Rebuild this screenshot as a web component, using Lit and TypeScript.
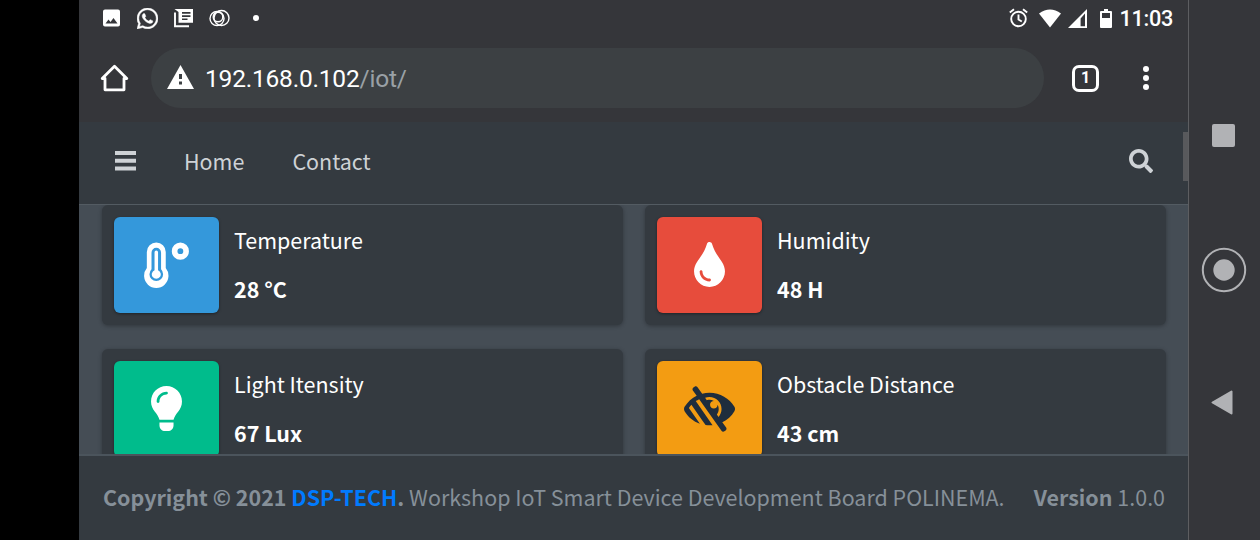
import { LitElement, html, css } from "lit";
import { customElement, property } from "lit/decorators.js";

const glyphs = {
  temperature: html`<svg width="46" height="46" viewBox="0 0 46 46">
    <g transform="translate(.1 .2) scale(.975)">
      <path fill="#fff" d="M2.800 10a9.700 9.700 0 0 1 19.400 0v16.500a12.500 12.500 0 1 1-19.400 0z"/>
      <path fill="#3498db" d="M7.600 10.700a4.900 4.900 0 0 1 9.800 0v17.100a7 7 0 1 1-9.800 0z"/>
      <path fill="#fff" d="M10.700 10.400a1.800 1.800 0 0 1 3.600 0v18.300a4.600 4.600 0 1 1-3.600 0z"/>
      <circle cx="37.200" cy="9.200" r="5.900" fill="none" stroke="#fff" stroke-width="5.800"/>
    </g></svg>`,
  humidity: html`<svg width="31" height="45" viewBox="0 0 352 512"><path fill="#fff" d="M205.22 22.09c-7.94-28.78-49.44-30.12-58.44 0C100.01 179.85 0 222.72 0 333.91 0 432.35 78.72 512 176 512s176-79.65 176-178.09c0-111.75-99.79-153.34-146.78-311.82zM176 448c-61.75 0-112-50.25-112-112 0-8.84 7.16-16 16-16s16 7.16 16 16c0 44.11 35.89 80 80 80 8.84 0 16 7.16 16 16s-7.16 16-16 16z"/></svg>`,
  light: html`<svg width="31" height="45" viewBox="0 0 352 512"><path fill="#fff" fill-rule="evenodd" d="M176 0C76 0 0 80 0 176c0 45 17 85 44 116 17 19 43 58 52 92h160c9-34 35-73 52-92 27-31 44-71 44-116C352 79 273 0 176 0zm0 64c9 0 16 7 16 16s-7 16-16 16c-44 0-80 36-80 80 0 9-7 16-16 16s-16-7-16-16c0-62 50-112 112-112zM96 416v32c0 35 29 64 64 64h32c35 0 64-29 64-64v-32z"/></svg>`,
  distance: html`<svg width="51" height="46" viewBox="0 0 576 512"><path fill="#1f2d3d" d="M569.344 231.631C512.96 135.949 407.81 72 288 72c-28.468 0-56.102 3.619-82.451 10.415L152.778 10.24c-7.601-10.858-22.564-13.5-33.423-5.9l-13.114 9.178c-10.86 7.601-13.502 22.566-5.9 33.426l43.131 58.395C89.449 131.73 40.228 174.683 6.682 231.581c-.01.017-.023.033-.034.05-8.765 14.875-8.964 33.528 0 48.739 38.5 65.332 99.742 115.862 172.859 141.349L55.316 244.302A272.194 272.194 0 0 1 83.61 208.39l119.4 170.58h.01l40.63 58.04a330.055 330.055 0 0 0 78.94 1.17l-189.98-271.4a277.628 277.628 0 0 1 38.777-21.563l251.836 356.544c7.601 10.858 22.564 13.499 33.423 5.9l13.114-9.178c10.86-7.601 13.502-22.567 5.9-33.426l-43.12-58.377-.007-.009c57.161-27.978 104.835-72.04 136.81-126.301a47.938 47.938 0 0 0 .001-48.739zM390.026 345.94l-19.066-27.23c24.682-32.567 27.711-76.353 8.8-111.68v.03c0 23.65-19.17 42.82-42.82 42.82-23.828 0-42.82-19.349-42.82-42.82 0-23.65 19.17-42.82 42.82-42.82h.03c-24.75-13.249-53.522-15.643-79.51-7.68l-19.068-27.237C253.758 123.306 270.488 120 288 120c75.162 0 136 60.826 136 136 0 34.504-12.833 65.975-33.974 89.94z"/></svg>`,
};
type Kind = keyof typeof glyphs;

@customElement("sensor-card")
class SensorCard extends LitElement {
  @property() kind: Kind = "temperature";
  @property() label = "";
  @property() value = "";
  static styles = css`
    :host { display: flex; box-sizing: border-box; height: 120px; padding: 12px; border-radius: 6px;
      background: #343a40; color: #fff; box-shadow: 0 1px 4px rgba(0,0,0,.3); }
    .tile { display: flex; align-items: center; justify-content: center; box-sizing: border-box; width: 105px; height: 96px;
      padding-bottom: 1px; border-radius: 6px; box-shadow: 0 1px 3px rgba(0,0,0,.4); }
    .tile svg { display: block; }
    .temperature { background: #3498db; }
    .humidity { background: #e74c3c; }
    .light { background: #00bc8c; }
    .distance { background: #f39c12; }
    .copy { display: flex; flex-direction: column; gap: 13px; padding: 5px 0 0 15px; }
    .copy span { line-height: 36px; white-space: nowrap; }
    .value { font-weight: 700; }
  `;
  render() {
    return html`<div class="tile ${this.kind}">${glyphs[this.kind]}</div>
      <div class="copy"><span>${this.label}</span><span class="value">${this.value}</span></div>`;
  }
}

@customElement("status-bar")
class StatusBar extends LitElement {
  static styles = css`
    :host { display: flex; align-items: center; justify-content: space-between; height: 36px;
      padding: 0 15px 0 23px; color: #fff; font: 500 21.700px/36px Roboto, sans-serif; }
    .group { display: flex; align-items: center; }
    svg { display: block; }
    .left { gap: 15px; }
    .chat { margin-left: 1px; }
    .dot { width: 6px; height: 6px; border-radius: 50%; background: #fff; margin-left: 8px; }
    .wifi { margin-left: 11px; }
    .signal { margin-left: 7px; }
    .battery { margin-left: 13px; }
    .time { margin: 1px 0 0 7px; letter-spacing: -.3px; }
  `;
  render() {
    return html`
      <div class="group left">
        <svg width="19" height="20" viewBox="0 0 19 20"><path fill="#fff" fill-rule="evenodd" d="M3 1.500h13q2 0 2 2v13q0 2-2 2H3q-2 0-2-2v-13q0-2 2-2zm.500 14h12l-4-5.500-3 4-2-2.500z"/></svg>
        <svg class="chat" width="21" height="21" viewBox="0 32 448 448"><path fill="#fff" stroke="#fff" stroke-width="10" d="M380.9 97.1C339 55.1 283.2 32 223.900 32c-122.400 0-222 99.600-222 222 0 39.100 10.200 77.300 29.600 111L0 480l117.700-30.900c32.400 17.700 68.900 27 106.100 27h.1c122.300 0 224.100-99.600 224.100-222 0-59.300-25.200-115-67.100-157zm-157 341.600c-33.200 0-65.700-8.900-94-25.700l-6.700-4-69.800 18.300L72 359.200l-4.400-7c-18.500-29.400-28.200-63.300-28.200-98.200 0-101.700 82.800-184.500 184.600-184.500 49.300 0 95.600 19.200 130.400 54.100 34.800 34.900 56.200 81.200 56.100 130.500 0 101.800-84.900 184.600-186.600 184.600zm101.200-138.200c-5.500-2.800-32.800-16.200-37.900-18-5.100-1.900-8.800-2.800-12.500 2.800-3.700 5.600-14.300 18-17.600 21.800-3.200 3.700-6.500 4.200-12 1.400-32.600-16.300-54-29.100-75.500-66-5.700-9.800 5.700-9.100 16.300-30.300 1.800-3.700.9-6.900-.5-9.700-1.400-2.800-12.500-30.100-17.100-41.200-4.500-10.800-9.100-9.300-12.500-9.500-3.200-.2-6.900-.2-10.600-.2-3.700 0-9.700 1.400-14.800 6.900-5.100 5.600-19.400 19-19.400 46.300 0 27.300 19.900 53.700 22.600 57.400 2.800 3.700 39.100 59.700 94.800 83.800 35.200 15.200 49 16.500 66.600 13.900 10.700-1.600 32.800-13.400 37.400-26.400 4.600-13 4.600-24.100 3.200-26.400-1.300-2.500-5-3.900-10.500-6.600z"/></svg>
        <svg width="21" height="20" viewBox="0 0 21 20"><path fill="none" stroke="#fff" stroke-width="1.900" d="M2 4.500v13.700h14"/><path fill="#fff" fill-rule="evenodd" d="M1.500 1H20v13.700H5.500V4zM9 4v1.800h8.500V4zm0 3.200V9h8.500V7.200zm0 3.200v1.700h5.500v-1.700z"/></svg>
        <svg width="21" height="18" viewBox="0 0 21 18"><g fill="none" stroke="#fff" stroke-width="1.400"><circle cx="12.500" cy="9" r="7.500"/><circle cx="8" cy="9.500" r="7"/><circle cx="9" cy="8" r="4.800"/></g></svg>
        <span class="dot"></span>
      </div>
      <div class="group">
        <svg width="19" height="20" viewBox="0 0 19 20"><g fill="none" stroke="#fff" stroke-width="1.900"><circle cx="9.500" cy="11" r="7.300"/><path d="M.8 4.500 5 1.200M18.200 4.500 14 1.200M9.500 6.500v5l3.300 2"/></g></svg>
        <svg class="wifi" width="22" height="19" viewBox="0 0 22 19"><path fill="#fff" d="M0 4.500Q11-3.500 22 4.500L11 18.500z"/></svg>
        <svg class="signal" width="19" height="19" viewBox="0 0 19 19"><path fill="#fff" fill-rule="evenodd" d="M19 0v19H0zM12.600 9.400v7.800H17V4.600z"/></svg>
        <svg class="battery" width="12" height="19" viewBox="0 0 12 19"><path fill="#fff" fill-rule="evenodd" d="M4 0h4v2h3q1 0 1 1v15q0 1-1 1H1q-1 0-1-1V3q0-1 1-1h3zM2 4v5h8V4z"/></svg>
        <span class="time">11:03</span>
      </div>`;
  }
}

@customElement("address-bar")
class AddressBar extends LitElement {
  static styles = css`
    :host { display: flex; align-items: center; height: 60px; margin-top: 12px; padding: 0 39px 0 21px;
      color: #fff; font-family: Roboto, sans-serif; }
    svg { display: block; }
    .pill { display: flex; align-items: center; flex: 1; height: 60px; margin: 0 28px 0 22px; padding-left: 16px;
      box-sizing: border-box; border-radius: 30px; background: #3c4043; font-size: 24.500px; }
    .pill svg { margin-bottom: 2px; }
    .url { margin: 2px 0 0 11px; letter-spacing: -.2px; }
    .path { color: #9aa0a6; }
    .tabs { display: flex; align-items: center; justify-content: center; box-sizing: border-box; width: 27px; height: 27px;
      border: 3px solid #fff; border-radius: 7px; font-weight: 700; font-size: 16px; }
    .menu { display: grid; gap: 3px; margin-left: 44px; }
    .menu i { width: 6px; height: 6px; border-radius: 50%; background: #fff; }
  `;
  render() {
    return html`
      <svg width="29" height="28" viewBox="0 0 29 28"><path fill="none" stroke="#fff" stroke-width="2.800" stroke-linejoin="round" d="M2.200 14.500 14.500 2.200l12.300 12.300H24v11.300H5V14.500z"/></svg>
      <div class="pill">
        <svg width="27" height="24" viewBox="0 0 27 24"><path fill="#fff" fill-rule="evenodd" d="M13.500 0 27 24H0zM12 9v5h3V9zm0 7.500v3h3v-3z"/></svg>
        <span class="url">192.168.0.102<span class="path">/iot/</span></span>
      </div>
      <div class="tabs">1</div>
      <div class="menu"><i></i><i></i><i></i></div>`;
  }
}

@customElement("app-root")
class AppRoot extends LitElement {
  static styles = css`
    :host { display: grid; grid-template-columns: 79px 1109px 72px; width: 1260px; height: 540px; overflow: hidden;
      background: #000; font: 400 21.460px/36px "Noto Sans CJK JP", "Noto Sans CJK SC", sans-serif; }
    svg { display: block; }
    .screen { grid-column: 2; display: flex; flex-direction: column; height: 540px; min-width: 0; background: #35363a; }
    .navbar { display: flex; align-items: center; box-sizing: border-box; height: 83px; margin-top: 14px;
      padding: 0 0 4px 36px; color: #ced2d6; background: #343a40; border-bottom: 1px solid #535b62; }
    .navbar .home { margin-left: 48px; }
    .navbar .contact { margin-left: 48px; }
    .navbar .search { margin-left: auto; }
    .thumb { width: 5px; height: 49px; margin: -9px 0 0 30px; background: #58595c; }
    .content { display: grid; grid-template-columns: 521px 521px; grid-auto-rows: 120px; gap: 24px 22px; height: 249px;
      padding-left: 23px; overflow: hidden; background: #454d55; }
    .footer { display: flex; align-items: center; justify-content: space-between; box-sizing: border-box; height: 86px;
      padding: 0 23px 2px 24px; white-space: nowrap; color: #869099; background: #343a40; border-top: 2px solid #4b545c; }
    .footer a { color: #007bff; text-decoration: none; }
    .keys { box-sizing: border-box; display: flex; flex-direction: column; align-items: center; height: 540px;
      padding: 124px 2px 0 0; background: #35363a; border-left: 1px solid #5d5e61; }
    .square { width: 23px; height: 23px; border-radius: 2px; background: #b1b2b5; }
    .circle { margin-top: 100px; }
    .back { margin: 97px 3px 0 0; }
  `;
  render() {
    return html`
      <main class="screen">
        <status-bar></status-bar>
        <address-bar></address-bar>
        <nav class="navbar">
          <svg width="21" height="20" viewBox="0 0 21 20"><path fill="#ced2d6" d="M0 0h21v4H0zM0 7.700h21v4H0zM0 15.400h21v4H0z"/></svg>
          <span class="home">Home</span><span class="contact">Contact</span>
          <svg class="search" width="24" height="24" viewBox="0 0 512 512"><path fill="#ced2d6" d="M505 442.700L405.300 343c-4.500-4.500-10.600-7-17-7H372c27.600-35.300 44-79.700 44-128C416 93.100 322.900 0 208 0S0 93.100 0 208s93.100 208 208 208c48.300 0 92.700-16.400 128-44v16.300c0 6.400 2.500 12.500 7 17l99.700 99.700c9.400 9.400 24.600 9.400 33.900 0l28.300-28.300c9.400-9.400 9.400-24.600.1-34zM208 336c-70.700 0-128-57.200-128-128 0-70.700 57.200-128 128-128 70.700 0 128 57.200 128 128 0 70.700-57.200 128-128 128z"/></svg>
          <div class="thumb"></div>
        </nav>
        <section class="content">
          <sensor-card kind="temperature" label="Temperature" value="28 °C"></sensor-card>
          <sensor-card kind="humidity" label="Humidity" value="48 H"></sensor-card>
          <sensor-card kind="light" label="Light Itensity" value="67 Lux"></sensor-card>
          <sensor-card kind="distance" label="Obstacle Distance" value="43 cm"></sensor-card>
        </section>
        <footer class="footer">
          <span><b>Copyright © 2021 <a>DSP-TECH</a>.</b> Workshop IoT Smart Device Development Board POLINEMA.</span>
          <span><b>Version</b> 1.0.0</span>
        </footer>
      </main>
      <aside class="keys">
        <div class="square"></div>
        <svg class="circle" width="46" height="46" viewBox="0 0 46 46"><circle cx="23" cy="23" r="21.200" fill="none" stroke="#b1b2b5" stroke-width="2"/><circle cx="23" cy="23" r="10.700" fill="#b1b2b5"/></svg>
        <svg class="back" width="22" height="25" viewBox="0 0 22 25"><path fill="#b1b2b5" stroke="#b1b2b5" stroke-width="2" stroke-linejoin="round" d="M1.500 12.500 20.500 1.500v22z"/></svg>
      </aside>`;
  }
}
